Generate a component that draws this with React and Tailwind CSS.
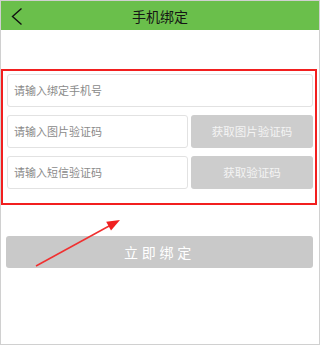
import React from "react";

const FONT = { fontFamily: '"Noto Sans CJK SC", "Noto Sans", sans-serif' };

function BackIcon() {
  return (
    <svg width="14" height="20" viewBox="0 0 14 20" className="absolute left-[9px] top-[6px]">
      <path d="M11.5 1.5 L2.5 9.5 L11.5 17.5" fill="none" stroke="#111" strokeWidth="1.4" />
    </svg>
  );
}

function Field({ placeholder, action }) {
  return (
    <div className="flex h-[33px] gap-[3px]">
      <div className="flex-1 flex items-center pl-[6px] border border-[#e2e2e2] rounded-[3px] bg-white text-[11px] text-[#8a8a8a]">
        {placeholder}
      </div>
      {action && (
        <div className="w-[122px] flex items-center justify-center rounded-[3px] bg-[#cdcdcd] text-[11.5px] text-[#f4f4f4]">
          {action}
        </div>
      )}
    </div>
  );
}

export default function App() {
  return (
    <div
      className="relative w-[320px] h-[345px] overflow-hidden bg-white border border-[#d0d0d0]"
      style={FONT}
    >
      {/* header */}
      <div className="relative h-[29px] bg-[#6abf4b] flex items-center justify-center">
        <BackIcon />
        <span className="text-[14px] text-[#151515] leading-none">手机绑定</span>
      </div>

      {/* form, highlighted */}
      <div className="mt-[39px] w-[316px] border-2 border-[#f21f1f] pt-[3px] pb-[14px] pl-[4px] pr-[2px] flex flex-col gap-[8px]">
        <Field placeholder="请输入绑定手机号" />
        <Field placeholder="请输入图片验证码" action="获取图片验证码" />
        <Field placeholder="请输入短信验证码" action="获取验证码" />
      </div>

      <div className="mt-[31px] ml-[5px] w-[307px] h-[32px] rounded-[3px] bg-[#c9c9c9] flex items-center justify-center text-[14px] tracking-[3.7px] text-white">
        立即绑定
      </div>

      {/* annotation arrow */}
      <svg className="absolute left-0 top-0 pointer-events-none" width="320" height="345" viewBox="-1 -1 320 345">
        <line x1="34" y1="264" x2="108" y2="223.5" stroke="#f03030" strokeWidth="1.5" />
        <polygon points="118,218 104.2,219.8 109,228.6" fill="#f02020" />
      </svg>
    </div>
  );
}
